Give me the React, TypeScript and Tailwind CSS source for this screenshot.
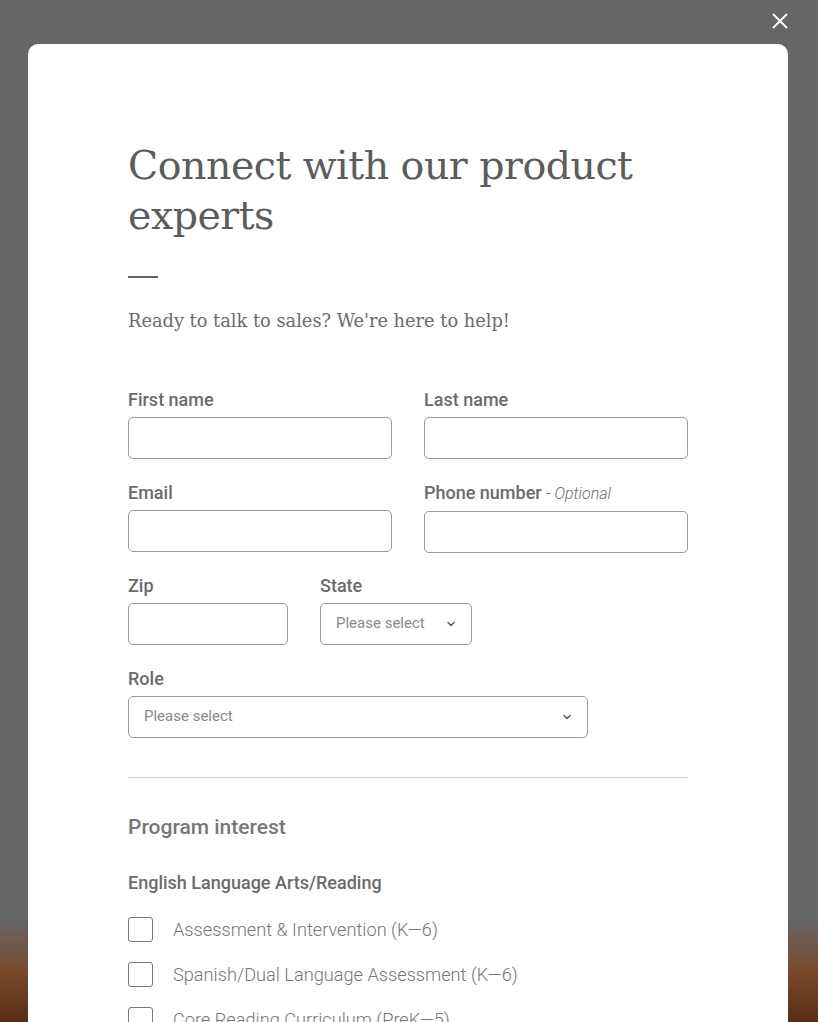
import React from "react";

const sans = "font-['Roboto','Liberation_Sans',sans-serif]";
const serif = "font-['DejaVu_Serif','Liberation_Serif',serif]";

const Chevron: React.FC = () => (
  <svg width="12" height="12" viewBox="0 0 12 12" fill="none" stroke="#555" strokeWidth="1.4">
    <path d="M3 4.5l3 3 3-3" strokeLinecap="round" strokeLinejoin="round" />
  </svg>
);

const Field: React.FC<{ label: React.ReactNode; className?: string }> = ({ label, className }) => (
  <div className={className}>
    <label className="block text-[18px] font-medium text-[#6b6b6b] leading-[22px] mb-[6px]">{label}</label>
    <div className="h-[42px] w-full rounded-[5px] border border-[#9a9a9a] bg-white" />
  </div>
);

const Select: React.FC<{ label: string; className?: string }> = ({ label, className }) => (
  <div className={className}>
    <label className="block text-[18px] font-medium text-[#6b6b6b] leading-[22px] mb-[6px]">{label}</label>
    <div className="h-[42px] w-full rounded-[5px] border border-[#9a9a9a] bg-white flex items-center justify-between pl-[15px] pr-[14px]">
      <span className="text-[15px] text-[#8a8a8a]">Please select</span>
      <Chevron />
    </div>
  </div>
);

const Check: React.FC<{ text: string }> = ({ text }) => (
  <div className="flex items-center gap-[20px] h-[25px]">
    <div className="w-[25px] h-[25px] rounded-[3px] border border-[#777] bg-white shrink-0" />
    <span className="text-[18.2px] text-[#777] font-light">{text}</span>
  </div>
);

export default function App() {
  return (
    <div className={`relative h-[1022px] overflow-hidden bg-[linear-gradient(to_bottom,#666_0%,#666_90%,#7a4a2c_95%,#5a2e14_100%)] ${sans}`}>
      <button className="absolute right-[29px] top-[12px] text-white">
        <svg width="18" height="18" viewBox="0 0 18 18" stroke="white" strokeWidth="1.8" fill="none">
          <path d="M2 2l14 14M16 2L2 16" />
        </svg>
      </button>
      <div className="pt-[44px] pl-[28px] pr-[30px]">
        <div className="bg-white rounded-[10px] px-[100px] pt-[96px] pb-[40px] min-h-[1100px]">
          <h1 className={`${serif} text-[39.5px] leading-[50px] text-[#5c5c5c] tracking-[-0.5px]`}>
            Connect with our product experts
          </h1>
          <div className="mt-[36px] w-[30px] h-[2px] bg-[#666]" />
          <p className={`${serif} mt-[30px] text-[17.8px] text-[#6b6b6b]`}>
            Ready to talk to sales? We're here to help!
          </p>
          <div className="mt-[54px] grid grid-cols-2 gap-x-[32px] gap-y-[23px]">
            <Field label="First name" />
            <Field label="Last name" />
            <Field label="Email" />
            <Field
              label={
                <>
                  Phone number <span className="italic font-light text-[16px]">- Optional</span>
                </>
              }
            />
          </div>
          <div className="mt-[22px] flex gap-[32px]">
            <Field label="Zip" className="w-[160px]" />
            <Select label="State" className="w-[152px]" />
          </div>
          <Select label="Role" className="mt-[23px] w-[460px]" />
          <div className="mt-[39px] h-px bg-[#d0d0d0]" />
          <h2 className="mt-[34px] text-[21px] font-medium text-[#777]">Program interest</h2>
          <h3 className="mt-[26px] text-[18px] font-medium text-[#6b6b6b]">English Language Arts/Reading</h3>
          <div className="mt-[21px] flex flex-col gap-[20px]">
            <Check text="Assessment & Intervention (K—6)" />
            <Check text="Spanish/Dual Language Assessment (K—6)" />
            <Check text="Core Reading Curriculum (PreK—5)" />
          </div>
        </div>
      </div>
    </div>
  );
}
